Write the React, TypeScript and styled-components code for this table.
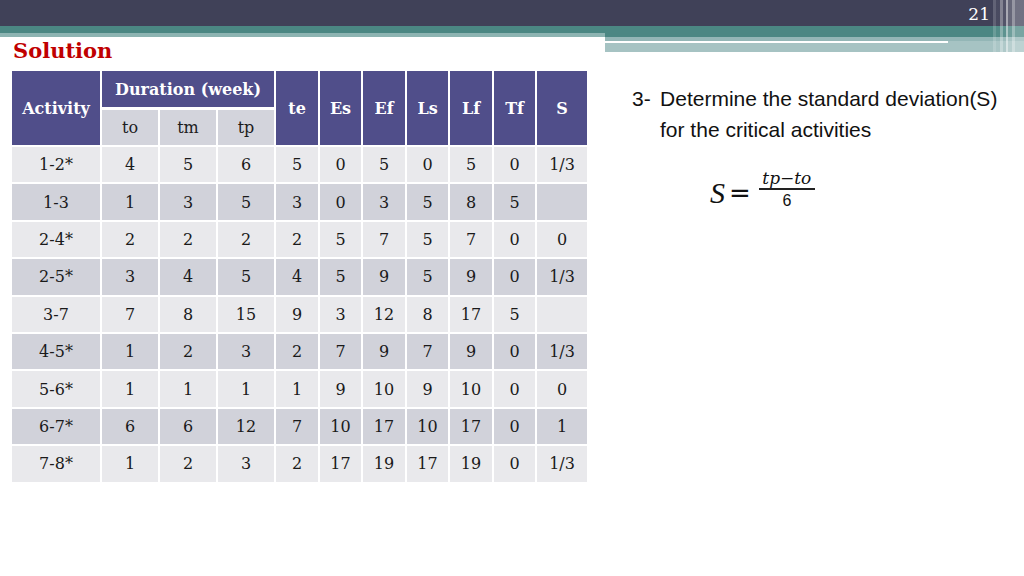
import React from 'react';
import styled, { createGlobalStyle } from 'styled-components';

const GlobalStyle = createGlobalStyle`
  html, body {
    margin: 0;
    padding: 0;
    background: #fff;
  }
  body {
    width: 1024px;
    height: 576px;
    overflow: hidden;
    font-family: "DejaVu Serif", serif;
  }
`;

const Slide = styled.div`
  width: 1024px;
  height: 576px;
  display: flex;
  flex-direction: column;
`;

const Header = styled.header`
  position: relative;
  height: 52px;
  display: flex;
  flex-direction: column;
`;

const TopBar = styled.div`
  height: 26px;
  background: #404158;
  display: flex;
  justify-content: flex-end;
  align-items: center;
  padding-right: 34px;
`;

const PageNum = styled.span`
  color: #fff;
  font-family: "DejaVu Serif", serif;
  font-size: 17px;
  line-height: 1;
  margin-top: 3px;
`;

const BandRow = styled.div`
  display: flex;
  height: 26px;
`;

const LeftBand = styled.div`
  width: 605px;
  height: 11px;
  display: flex;
  flex-direction: column;
`;

const Strip = styled.div<{ $h: number; $color: string }>`
  height: ${(p) => p.$h}px;
  background: ${(p) => p.$color};
`;

const RightBand = styled.div`
  flex: 1;
  display: flex;
  flex-direction: column;
`;

const LineStrip = styled.div`
  height: 2px;
  background: #a6c3c3;
  display: flex;
`;

const WhiteLine = styled.div`
  width: 343px;
  background: #fff;
`;

const Stripes = styled.div`
  position: absolute;
  right: 0;
  top: 0;
  width: 31px;
  height: 52px;
  background: linear-gradient(
    to right,
    rgba(255, 255, 255, 0.18) 0 3px,
    rgba(255, 255, 255, 0.05) 3px 7px,
    rgba(255, 255, 255, 0.35) 7px 10px,
    rgba(255, 255, 255, 0.1) 10px 13px,
    rgba(255, 255, 255, 0.55) 13px 15px,
    rgba(255, 255, 255, 0.2) 15px 19px,
    rgba(255, 255, 255, 0.45) 19px 22px,
    rgba(255, 255, 255, 0.25) 22px 31px
  );
`;

const Title = styled.h1`
  margin: -14px 0 0 13px;
  font-family: "DejaVu Serif", serif;
  font-weight: 700;
  font-size: 21px;
  line-height: 26px;
  color: #c00000;
  position: relative;
`;

const Content = styled.div`
  display: flex;
  align-items: flex-start;
  padding-left: 10px;
  margin-top: 7px;
`;

const Table = styled.table`
  width: 579px;
  table-layout: fixed;
  border-collapse: collapse;
  font-family: "DejaVu Serif", serif;
`;

const Col = styled.col<{ $w: number }>`
  width: ${(p) => p.$w}px;
`;

const HeadCell = styled.th<{ $under?: boolean }>`
  background: #504e8a;
  color: #fff;
  font-weight: 700;
  font-size: 16px;
  text-align: center;
  vertical-align: middle;
  padding: 0;
  height: 36px;
  border: 2px solid #fff;
  border-top: none;
  ${(p) => (p.$under ? 'border-bottom: 3px solid #fff;' : '')}
`;

const SubHeadCell = styled.th`
  background: #d3d4dc;
  color: #1c1c1c;
  font-weight: 400;
  font-size: 16px;
  text-align: center;
  padding: 0;
  height: 35px;
  border: 2px solid #fff;
`;

const Row = styled.tr<{ $dark: boolean }>`
  background: ${(p) => (p.$dark ? '#d1d2da' : '#e9e9ec')};
`;

const Cell = styled.td`
  height: 35.4px;
  padding: 0;
  text-align: center;
  vertical-align: middle;
  font-size: 16px;
  color: #1a1a1a;
  border: 2px solid #fff;
`;

const Side = styled.div`
  margin-left: 43px;
  padding-top: 12px;
  font-family: "Liberation Sans", Arial, sans-serif;
  color: #111;
`;

const Step = styled.div`
  display: grid;
  grid-template-columns: 31px auto;
  font-size: 21px;
  line-height: 31px;
`;

const StepText = styled.div`
  margin-left: -3px;
`;

const FormulaRow = styled.div`
  display: flex;
  align-items: center;
  margin: 32px 0 0 78px;
  gap: 4px;
`;

const BigS = styled.span`
  font-family: "Liberation Serif", serif;
  font-style: italic;
  font-size: 30px;
  line-height: 1;
`;

const Equals = styled.span`
  font-family: "DejaVu Sans", sans-serif;
  font-size: 26px;
  line-height: 1;
  margin-right: 4px;
`;

const Fraction = styled.span`
  display: inline-flex;
  flex-direction: column;
  align-items: center;
  margin-top: -8px;
`;

const Numer = styled.span`
  font-family: "DejaVu Serif", serif;
  font-style: italic;
  font-size: 17px;
  line-height: 18px;
`;

const Bar = styled.span`
  width: 56px;
  height: 1.5px;
  background: #222;
  margin: 1px 0 2px;
`;

const Denom = styled.span`
  font-family: "Liberation Sans", sans-serif;
  font-size: 16px;
  line-height: 17px;
`;

const widths = [90, 58, 58, 58, 44, 43, 44, 43, 44, 43, 52];
const singleHeads = ['te', 'Es', 'Ef', 'Ls', 'Lf', 'Tf', 'S'];

const rows: string[][] = [
  ['1-2*', '4', '5', '6', '5', '0', '5', '0', '5', '0', '1/3'],
  ['1-3', '1', '3', '5', '3', '0', '3', '5', '8', '5', ''],
  ['2-4*', '2', '2', '2', '2', '5', '7', '5', '7', '0', '0'],
  ['2-5*', '3', '4', '5', '4', '5', '9', '5', '9', '0', '1/3'],
  ['3-7', '7', '8', '15', '9', '3', '12', '8', '17', '5', ''],
  ['4-5*', '1', '2', '3', '2', '7', '9', '7', '9', '0', '1/3'],
  ['5-6*', '1', '1', '1', '1', '9', '10', '9', '10', '0', '0'],
  ['6-7*', '6', '6', '12', '7', '10', '17', '10', '17', '0', '1'],
  ['7-8*', '1', '2', '3', '2', '17', '19', '17', '19', '0', '1/3'],
];

const App: React.FC = () => {
  return (
    <Slide>
      <GlobalStyle />
      <Header>
        <TopBar>
          <PageNum>21</PageNum>
        </TopBar>
        <BandRow>
          <LeftBand>
            <Strip $h={7} $color="#4b8783" />
            <Strip $h={4} $color="#8db4b2" />
          </LeftBand>
          <RightBand>
            <Strip $h={11} $color="#4b8783" />
            <Strip $h={4} $color="#93b6b6" />
            <LineStrip>
              <WhiteLine />
            </LineStrip>
            <Strip $h={9} $color="#a6c3c3" />
          </RightBand>
        </BandRow>
        <Stripes />
      </Header>

      <Title>Solution</Title>

      <Content>
        <Table>
          <colgroup>
            {widths.map((w, i) => (
              <Col key={i} $w={w} />
            ))}
          </colgroup>
          <thead>
            <tr>
              <HeadCell rowSpan={2}>Activity</HeadCell>
              <HeadCell colSpan={3} $under>
                Duration (week)
              </HeadCell>
              {singleHeads.map((h) => (
                <HeadCell key={h} rowSpan={2}>
                  {h}
                </HeadCell>
              ))}
            </tr>
            <tr>
              <SubHeadCell>to</SubHeadCell>
              <SubHeadCell>tm</SubHeadCell>
              <SubHeadCell>tp</SubHeadCell>
            </tr>
          </thead>
          <tbody>
            {rows.map((r, i) => (
              <Row key={r[0]} $dark={i % 2 === 1}>
                {r.map((v, j) => (
                  <Cell key={j}>{v}</Cell>
                ))}
              </Row>
            ))}
          </tbody>
        </Table>

        <Side>
          <Step>
            <span>3-</span>
            <StepText>
              Determine the standard deviation(S)
              <br />
              for the critical activities
            </StepText>
          </Step>
          <FormulaRow>
            <BigS>S</BigS>
            <Equals>=</Equals>
            <Fraction>
              <Numer>tp−to</Numer>
              <Bar />
              <Denom>6</Denom>
            </Fraction>
          </FormulaRow>
        </Side>
      </Content>
    </Slide>
  );
};

export default App;
